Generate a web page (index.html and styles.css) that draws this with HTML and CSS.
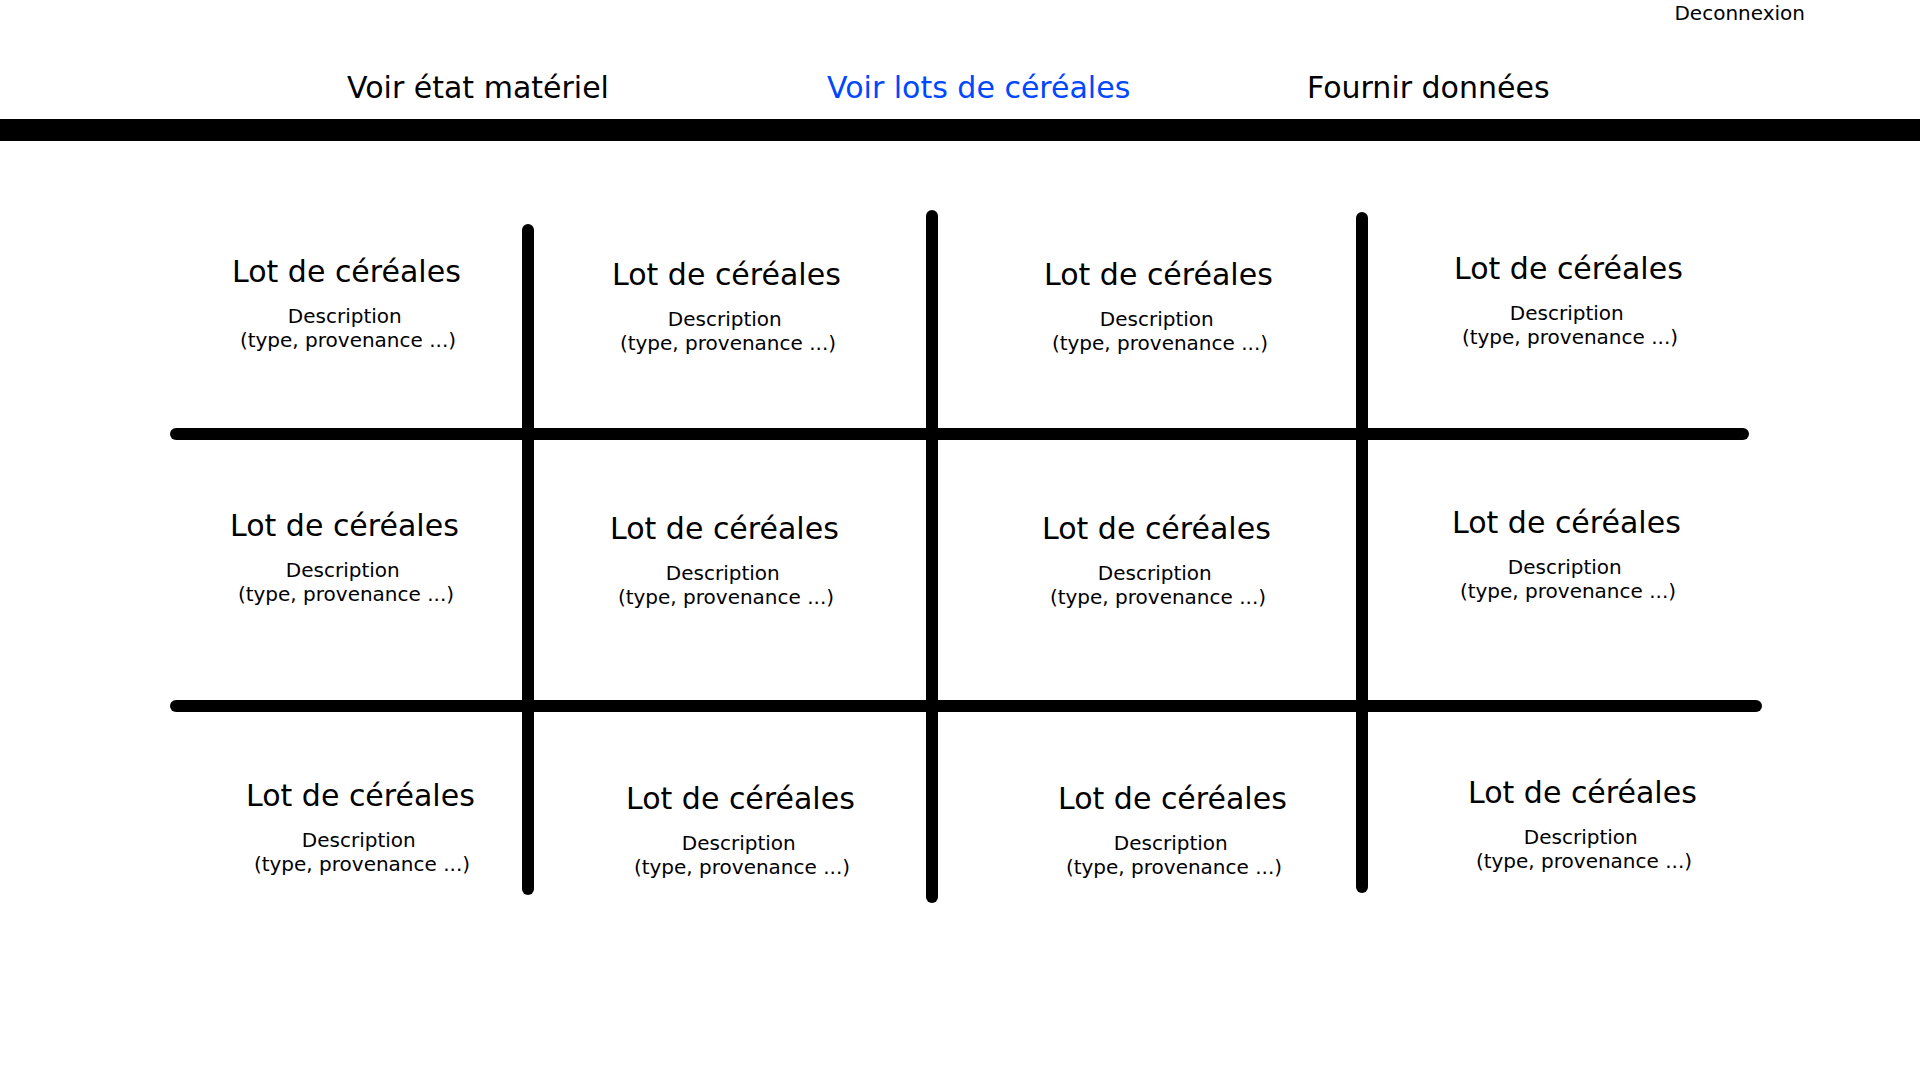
FILE: index.html
```html
<!DOCTYPE html>
<html lang="fr">
<head>
<meta charset="utf-8">
<meta name="viewport" content="width=device-width, initial-scale=1">
<title>Lots de céréales</title>
<link rel="stylesheet" href="styles.css">
</head>
<body>
<header class="header">
  <div class="account"><a href="#">Deconnexion</a></div>
  <nav class="nav">
    <a href="#">Voir état matériel</a>
    <a href="#" class="active" aria-current="page">Voir lots de céréales</a>
    <a href="#">Fournir données</a>
  </nav>
</header>
<main class="lots">
  <article class="lot row-1 col-1"><h2>Lot de céréales</h2><p>Description&nbsp;<br>(type, provenance ...)</p></article>
  <article class="lot row-1 col-2"><h2>Lot de céréales</h2><p>Description&nbsp;<br>(type, provenance ...)</p></article>
  <article class="lot row-1 col-3"><h2>Lot de céréales</h2><p>Description&nbsp;<br>(type, provenance ...)</p></article>
  <article class="lot row-1 col-4"><h2>Lot de céréales</h2><p>Description&nbsp;<br>(type, provenance ...)</p></article>
  <article class="lot row-2 col-1"><h2>Lot de céréales</h2><p>Description&nbsp;<br>(type, provenance ...)</p></article>
  <article class="lot row-2 col-2"><h2>Lot de céréales</h2><p>Description&nbsp;<br>(type, provenance ...)</p></article>
  <article class="lot row-2 col-3"><h2>Lot de céréales</h2><p>Description&nbsp;<br>(type, provenance ...)</p></article>
  <article class="lot row-2 col-4"><h2>Lot de céréales</h2><p>Description&nbsp;<br>(type, provenance ...)</p></article>
  <article class="lot row-3 col-1"><h2>Lot de céréales</h2><p>Description&nbsp;<br>(type, provenance ...)</p></article>
  <article class="lot row-3 col-2"><h2>Lot de céréales</h2><p>Description&nbsp;<br>(type, provenance ...)</p></article>
  <article class="lot row-3 col-3"><h2>Lot de céréales</h2><p>Description&nbsp;<br>(type, provenance ...)</p></article>
  <article class="lot row-3 col-4"><h2>Lot de céréales</h2><p>Description&nbsp;<br>(type, provenance ...)</p></article>
  <span class="bar bar-v1"></span>
  <span class="bar bar-v2"></span>
  <span class="bar bar-v3"></span>
  <span class="bar bar-h1"></span>
  <span class="bar bar-h2"></span>
</main>
</body>
</html>
```
FILE: styles.css
```css
* {
  box-sizing: border-box;
}

body {
  margin: 0;
  background: #fff;
  color: #000;
  font-family: "DejaVu Sans", sans-serif;
  font-size: 20px;
  line-height: 24px;
}

a {
  color: inherit;
  text-decoration: none;
}

.header {
  padding-top: 1px;
  border-bottom: 22px solid #000;
}

.account {
  display: flex;
  justify-content: flex-end;
  padding-right: 115px;
}

.nav {
  display: grid;
  grid-template-columns: 480fr 480fr 613fr;
  padding: 45px 0 13px 347px;
  font-size: 30px;
  line-height: 36px;
}

.nav .active {
  color: #0048ff;
}

/* Lots and the bars between them share one grid; bars sit in the 12px tracks. */
.lots {
  display: grid;
  grid-template-columns: 352fr 12px 392fr 12px 418fr 12px 394fr;
  grid-template-rows: minmax(218px, auto) 12px minmax(260px, auto) 12px minmax(191px, auto);
  padding: 69px 158px 69px 170px;
}

.lot {
  display: flex;
  flex-direction: column;
  align-items: flex-start;
  gap: 14px;
  padding-top: calc(var(--row-top) + var(--col-top));
  padding-left: calc(var(--row-left) + var(--col-left));
}

.lot h2 {
  margin: 0;
  font-size: 30px;
  font-weight: 400;
  line-height: 36px;
  white-space: nowrap;
}

.lot p {
  width: 232px;
  margin: 0;
  text-align: center;
  white-space: nowrap;
}

.row-1 { grid-row: 1; --row-top: 41px; --row-left: 2px; }
.row-2 { grid-row: 3; --row-top: 65px; --row-left: 0px; }
.row-3 { grid-row: 5; --row-top: 63px; --row-left: 16px; }

.col-1 { grid-column: 1; --col-top: 3px; --col-left: 60px; }
.col-2 { grid-column: 3; --col-top: 6px; --col-left: 76px; }
.col-3 { grid-column: 5; --col-top: 6px; --col-left: 104px; }
.col-4 { grid-column: 7; --col-top: 0px; --col-left: 84px; }

.bar {
  border-radius: 6px;
  background: #000;
}

.bar-v1 { grid-area: 1 / 2 / -1 / 3; margin: 14px 0 8px; }
.bar-v2 { grid-area: 1 / 4 / -1 / 5; }
.bar-v3 { grid-area: 1 / 6 / -1 / 7; margin: 2px 0 10px; }
.bar-h1 { grid-area: 2 / 1 / 3 / -1; margin-right: 13px; }
.bar-h2 { grid-area: 4 / 1 / 5 / -1; }
```
